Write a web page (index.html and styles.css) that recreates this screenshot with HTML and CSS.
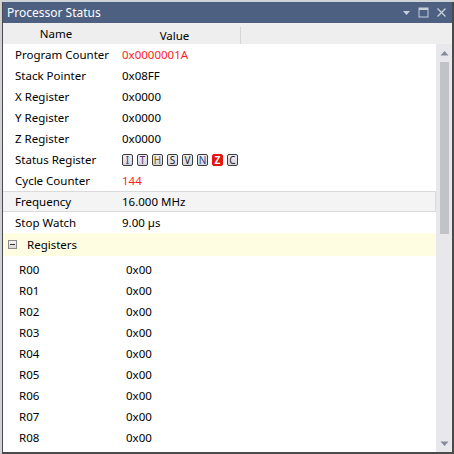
FILE: index.html
```html
<!DOCTYPE html>
<html>
<head>
<meta charset="utf-8">
<link rel="stylesheet" href="styles.css">
</head>
<body>
<div class="window">
  <div class="titlebar">
    <span class="title">Processor Status</span>
    <div class="tb-buttons">
      <svg class="tb-icon" width="9" height="9" viewBox="0 0 9 9"><path d="M1 3 L8 3 L4.5 7 Z" fill="#c8cfdc"/></svg>
      <svg class="tb-icon" width="11" height="11" viewBox="0 0 11 11"><rect x="1" y="1" width="9" height="9" fill="none" stroke="#c8cfdc" stroke-width="1"/><rect x="1" y="1" width="9" height="2" fill="#c8cfdc"/></svg>
      <svg class="tb-icon" width="11" height="11" viewBox="0 0 11 11"><path d="M1.5 1.5 L9.5 9.5 M9.5 1.5 L1.5 9.5" stroke="#c8cfdc" stroke-width="1.3"/></svg>
    </div>
  </div>
  <div class="header">
    <div class="hcell hname">Name</div>
    <div class="hcell hvalue">Value</div>
    <div class="hcell hrest"></div>
  </div>
  <div class="body">
    <div class="grid">
      <div class="row"><span class="name">Program Counter</span><span class="value red">0x0000001A</span></div>
      <div class="row"><span class="name">Stack Pointer</span><span class="value">0x08FF</span></div>
      <div class="row"><span class="name">X Register</span><span class="value">0x0000</span></div>
      <div class="row"><span class="name">Y Register</span><span class="value">0x0000</span></div>
      <div class="row"><span class="name">Z Register</span><span class="value">0x0000</span></div>
      <div class="row"><span class="name">Status Register</span>
        <span class="value bits">
          <span class="bit b-i">I</span><span class="bit b-t">T</span><span class="bit b-h">H</span><span class="bit">S</span><span class="bit">V</span><span class="bit b-n">N</span><span class="bit b-z">Z</span><span class="bit">C</span>
        </span>
      </div>
      <div class="row"><span class="name">Cycle Counter</span><span class="value red">144</span></div>
      <div class="row selected"><span class="name">Frequency</span><span class="value">16.000 MHz</span></div>
      <div class="row"><span class="name">Stop Watch</span><span class="value">9.00 µs</span></div>
      <div class="group"><span class="collapse"></span><span class="gname">Registers</span></div>
      <div class="regs">
        <div class="row reg"><span class="name">R00</span><span class="value">0x00</span></div>
        <div class="row reg"><span class="name">R01</span><span class="value">0x00</span></div>
        <div class="row reg"><span class="name">R02</span><span class="value">0x00</span></div>
        <div class="row reg"><span class="name">R03</span><span class="value">0x00</span></div>
        <div class="row reg"><span class="name">R04</span><span class="value">0x00</span></div>
        <div class="row reg"><span class="name">R05</span><span class="value">0x00</span></div>
        <div class="row reg"><span class="name">R06</span><span class="value">0x00</span></div>
        <div class="row reg"><span class="name">R07</span><span class="value">0x00</span></div>
        <div class="row reg"><span class="name">R08</span><span class="value">0x00</span></div>
      </div>
    </div>
    <div class="scrollbar">
      <svg class="arrow" width="9" height="6" viewBox="0 0 9 6"><path d="M0.5 5.5 L4.5 1 L8.5 5.5 Z" fill="#868a9a"/></svg>
      <div class="thumb"></div>
      <div class="spacer"></div>
      <svg class="arrow" width="9" height="6" viewBox="0 0 9 6"><path d="M0.5 0.5 L8.5 0.5 L4.5 5 Z" fill="#868a9a"/></svg>
    </div>
  </div>
</div>
</body>
</html>
```
FILE: styles.css
```css
html, body {
  margin: 0;
  padding: 0;
}
body {
  width: 454px;
  height: 454px;
  overflow: hidden;
  background: #cfd3d8;
  padding-top: 2px;
  padding-left: 2px;
  box-sizing: border-box;
  font-family: "Noto Sans", "Open Sans", sans-serif;
  font-size: 11.5px;
  color: #000;
  white-space: nowrap;
}
.window {
  width: 452px;
  height: 452px;
  box-sizing: border-box;
  border-left: 1px solid #4a4a4a;
  border-right: 2px solid #4a4a4a;
  border-bottom: 2px solid #4a4a4a;
  display: flex;
  flex-direction: column;
  background: #fff;
  overflow: hidden;
}
.titlebar {
  height: 21px;
  flex: none;
  background: #4d6082;
  display: flex;
  align-items: center;
  padding-left: 4px;
}
.title {
  color: #fff;
  font-size: 12px;
  line-height: 21px;
}
.tb-buttons {
  margin-left: auto;
  display: flex;
  align-items: center;
  gap: 7px;
  padding-right: 5px;
}
.tb-icon {
  display: block;
}
.header {
  height: 21px;
  flex: none;
  background: #eeeeee;
  display: flex;
}
.hcell {
  line-height: 21px;
  text-align: center;
}
.hname {
  width: 106px;
}
.hvalue {
  width: 131px;
  border-right: 1px solid #d6d6d6;
  margin: 4px 0 0 0;
  line-height: 17px;
  height: 17px;
}
.hrest {
  flex: 1;
}
.body {
  flex: 1;
  display: flex;
  min-height: 0;
}
.grid {
  flex: 1;
  overflow: hidden;
}
.row {
  height: 21px;
  display: flex;
  align-items: center;
  box-sizing: border-box;
}
.name {
  width: 107px;
  padding-left: 12px;
  box-sizing: border-box;
  flex: none;
}
.value {
  padding-left: 12px;
}
.red {
  color: #ff1c1c;
}
.selected {
  background: #f4f4f4;
  border-top: 1px solid #dadada;
  border-bottom: 1px solid #dadada;
  border-right: 1px solid #dadada;
}
.bits {
  display: flex;
  gap: 4px;
}
.bit {
  width: 11px;
  height: 12px;
  box-sizing: border-box;
  border: 1px solid #3c3c3c;
  border-radius: 2px;
  background: linear-gradient(#f0f0f4, #d4d6de);
  font-size: 10px;
  line-height: 10px;
  text-align: center;
  color: #222;
}
.b-i { color: #3a2f8a; }
.b-t { color: #5a2f6a; }
.b-h { color: #8a5a10; }
.b-n { color: #2a4a8a; }
.b-z {
  background: #e8150f;
  border-color: #e8150f;
  color: #fff;
  font-weight: bold;
}
.group {
  height: 23px;
  background: #fffde1;
  display: flex;
  align-items: center;
}
.collapse {
  width: 9px;
  height: 9px;
  box-sizing: border-box;
  border: 1px solid #8a8a8a;
  background: linear-gradient(#f4f4f4, #d8d8d8);
  margin-left: 5px;
  position: relative;
  flex: none;
}
.collapse::after {
  content: "";
  position: absolute;
  left: 1px;
  right: 1px;
  top: 3px;
  height: 1px;
  background: #333;
}
.gname {
  padding-left: 10px;
}
.regs {
  padding-top: 3px;
}
.reg .name {
  padding-left: 16px;
}
.reg .value {
  padding-left: 16px;
}
.scrollbar {
  width: 16px;
  flex: none;
  background: #e8e8ec;
  display: flex;
  flex-direction: column;
  align-items: center;
  padding: 6px 0 5px 0;
  box-sizing: border-box;
}
.arrow {
  display: block;
  flex: none;
}
.thumb {
  width: 9px;
  height: 172px;
  background: #c2c3c9;
  margin-top: 6px;
  flex: none;
}
.spacer {
  flex: 1;
}
```
